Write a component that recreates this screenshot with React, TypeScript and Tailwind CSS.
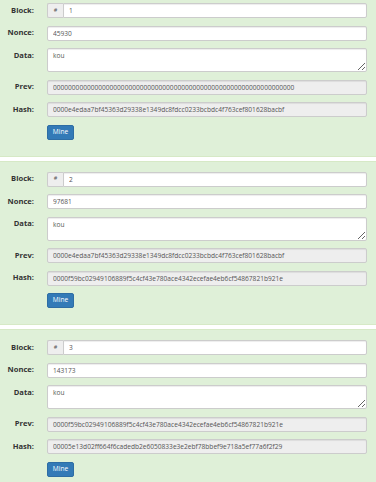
const blocks = [
  {
    block: '1',
    nonce: '45930',
    data: 'kou',
    prev: '0000000000000000000000000000000000000000000000000000000000000000',
    hash: '0000e4edaa7bf45363d29338e1349dc8fdcc0233bcbdc4f763cef801628bacbf',
  },
  {
    block: '2',
    nonce: '97681',
    data: 'kou',
    prev: '0000e4edaa7bf45363d29338e1349dc8fdcc0233bcbdc4f763cef801628bacbf',
    hash: '0000f59bc02949106889f5c4cf43e780ace4342ecefae4eb6cf54867821b921e',
  },
  {
    block: '3',
    nonce: '143173',
    data: 'kou',
    prev: '0000f59bc02949106889f5c4cf43e780ace4342ecefae4eb6cf54867821b921e',
    hash: '00005e13d02ff664f6cadedb2e6050833e3e2ebf78bbef9e718a5ef77a6f2f29',
  },
];

const inputCls =
  'block h-[15px] w-full rounded-[2px] border border-[#ccc] px-[5px] text-[6.6px] leading-[13px] text-[#555] outline-none shadow-[inset_0_1px_1px_rgba(0,0,0,0.075)]';

const Label = ({ children }: { children: React.ReactNode }) => (
  <div className="flex h-[15px] w-[34px] shrink-0 items-center justify-end text-[7.6px] font-bold leading-none text-[#333]">
    {children}
  </div>
);

const Row = ({ label, children }: { label: string; children: React.ReactNode }) => (
  <div className="flex items-start gap-[13px]">
    <Label>{label}</Label>
    <div className="min-w-0 flex-1">{children}</div>
  </div>
);

const BlockCard = ({ b }: { b: (typeof blocks)[number] }) => (
  <div className="border-y border-[#d6e9c6] bg-[#dff0d8] pb-[16px] pr-[9px] pt-[10px]">
    <div className="flex flex-col gap-[7.5px]">
      <Row label="Block:">
        <div className="flex h-[15px]">
          <span className="flex w-[16px] shrink-0 items-center justify-center rounded-l-[2px] border border-r-0 border-[#ccc] bg-[#eee] text-[5.5px] leading-none text-[#555]">
            #
          </span>
          <input readOnly value={b.block} className={inputCls + ' rounded-l-none bg-white'} />
        </div>
      </Row>
      <Row label="Nonce:">
        <input readOnly value={b.nonce} className={inputCls + ' bg-white'} />
      </Row>
      <Row label="Data:">
        <textarea
          readOnly
          value={b.data}
          className="block h-[24px] w-full rounded-[2px] border border-[#ccc] bg-white px-[5px] py-[2px] text-[6.6px] leading-[9px] text-[#555] outline-none shadow-[inset_0_1px_1px_rgba(0,0,0,0.075)]"
        />
      </Row>
      <Row label="Prev:">
        <input readOnly value={b.prev} className={inputCls + ' bg-[#eee]'} />
      </Row>
      <Row label="Hash:">
        <input readOnly value={b.hash} className={inputCls + ' bg-[#eee]'} />
      </Row>
      <div className="flex pl-[47px]">
        <button className="block h-[15px] w-[27px] rounded-[2px] border border-[#2e6da4] bg-[#337ab7] text-[6.6px] leading-none text-white">
          Mine
        </button>
      </div>
    </div>
  </div>
);

export default function App() {
  return (
    <div className="h-[482px] overflow-hidden bg-white" style={{ fontFamily: '"Open Sans", sans-serif' }}>
      <div className="-mt-[8px] flex flex-col gap-[4px]">
        {blocks.map((b) => (
          <BlockCard key={b.block} b={b} />
        ))}
      </div>
    </div>
  );
}
